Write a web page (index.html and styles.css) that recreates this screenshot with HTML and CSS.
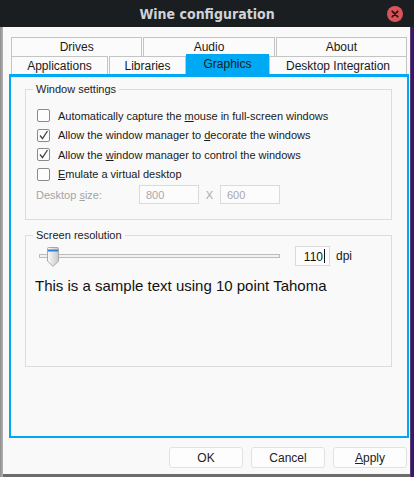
FILE: index.html
```html
<!DOCTYPE html>
<html lang="en">
<head>
    <meta charset="UTF-8">
    <title>Wine configuration</title>
    <link rel="stylesheet" href="styles.css">
</head>
<body>
<div class="desk">
    <div class="titlebar">
        <span></span>
        <span class="title">Wine configuration</span>
        <span class="close">
            <svg width="16" height="16" viewBox="0 0 16 16"><circle cx="8" cy="8" r="8" fill="#d9535a"/><path d="M5.3 5.3l5.4 5.4M10.7 5.3l-5.4 5.4" stroke="#2a1416" stroke-width="1.8" stroke-linecap="round"/></svg>
        </span>
    </div>
    <div class="win">
        <div class="tabs">
            <div class="tabrow row1">
                <a class="tab">Drives</a><a class="tab">Audio</a><a class="tab">About</a>
            </div>
            <div class="tabrow row2">
                <a class="tab w-apps">Applications</a><a class="tab w-libs">Libraries</a><a class="tab w-gfx active">Graphics</a><a class="tab w-desk">Desktop Integration</a>
            </div>
        </div>
        <div class="panel">
            <fieldset class="group g1">
                <legend>Window settings</legend>
                <label class="check"><span class="box"></span><span>Automatically capture the <u>m</u>ouse in full-screen windows</span></label>
                <label class="check"><span class="box"><svg width="13" height="13" viewBox="0 0 13 13"><path d="M3 6.5l2.5 3.2L10.5 2" fill="none" stroke="#444" stroke-width="1.3"/></svg></span><span>Allow the window manager to <u>d</u>ecorate the windows</span></label>
                <label class="check"><span class="box"><svg width="13" height="13" viewBox="0 0 13 13"><path d="M3 6.5l2.5 3.2L10.5 2" fill="none" stroke="#444" stroke-width="1.3"/></svg></span><span>Allow the <u>w</u>indow manager to control the windows</span></label>
                <label class="check"><span class="box"></span><span><u>E</u>mulate a virtual desktop</span></label>
                <div class="size">
                    <span class="size-label">Desktop <u>s</u>ize:</span>
                    <span class="field dim">800</span>
                    <span class="times">X</span>
                    <span class="field dim">600</span>
                </div>
            </fieldset>
            <fieldset class="group g2">
                <legend>Screen resolution</legend>
                <div class="dpi">
                    <div class="slider">
                        <div class="track"></div>
                        <svg class="thumb" width="12" height="20" viewBox="0 0 12 20"><defs><linearGradient id="tg" x1="0" x2="1"><stop offset="0" stop-color="#fafafa"/><stop offset="1" stop-color="#c8c8c8"/></linearGradient></defs><path d="M0.5 1.5a1 1 0 0 1 1-1h9a1 1 0 0 1 1 1v12.5l-5.5 5.5l-5.5-5.5z" fill="url(#tg)" stroke="#a8a8a8"/><rect x="1" y="2.5" width="10" height="2" fill="#2f7fd8"/></svg>
                    </div>
                    <span class="field num">110<i class="caret"></i></span>
                    <span class="unit">dpi</span>
                </div>
                <p class="sample">This is a sample text using 10 point Tahoma</p>
            </fieldset>
        </div>
        <div class="buttons">
            <button class="btn">OK</button>
            <button class="btn">Cancel</button>
            <button class="btn"><u>A</u>pply</button>
        </div>
    </div>
</div>
</body>
</html>
```

FILE: styles.css
```css
body {
    margin: 0;
    font-family: "Liberation Sans", Arial, sans-serif;
    font-size: 11px;
    color: #1a1a1a;
}

.desk {
    width: 414px;
    height: 477px;
    overflow: hidden;
    background: linear-gradient(90deg, #8e8e8e 0, #b4b4b4 3px, #6c6c6c 3px, #6c6c6c 410px, #3d1470 411px);
}

.titlebar {
    height: 27px;
    background: #1b1e21;
    display: grid;
    grid-template-columns: 1fr auto 1fr;
    align-items: center;
}

.title {
    font-family: "DejaVu Sans Condensed", "DejaVu Sans", sans-serif;
    font-stretch: condensed;
    font-weight: bold;
    font-size: 14px;
    color: #cfd3d7;
}

.close {
    justify-self: end;
    display: flex;
    margin-right: 11px;
}

.win {
    margin: 0 4px 0 3px;
    height: 447px;
    background: #f9f9f9;
    padding: 10px 0 0 6px;
    box-sizing: border-box;
}

.tabs {
    margin: 0 3px 0 2px;
}

.tabrow {
    display: flex;
}

.tab {
    display: block;
    text-align: center;
    height: 18px;
    line-height: 19px;
    background: #fbfbfb;
    border: 1px solid #c4c4c4;
    border-bottom: 0;
    box-sizing: border-box;
    margin-right: 1px;
    font-size: 12px;
}

.row1 .tab {
    flex: 1;
    height: 19px;
}

.row1 .tab:last-child,
.row2 .tab:last-child {
    margin-right: 0;
}

.row2 {
    align-items: flex-end;
    height: 18px;
}

.w-apps { width: 97px; }
.w-libs { width: 77px; margin-right: 0; }
.w-gfx { width: 83px; margin-right: 0; }
.w-desk { flex: 1; }

.tab.active {
    background: #00a9f4;
    border-color: #00a9f4;
    height: 20px;
    line-height: 18px;
}

.panel {
    width: 400px;
    height: 364px;
    box-sizing: border-box;
    border: 2px solid #00a9f4;
    border-top-width: 3px;
    padding: 6px 14px 0 14px;
}

.group {
    margin: 0;
    border: 1px solid #dddddd;
    padding: 0 10px 0 10px;
    width: 367px;
    box-sizing: border-box;
}

.group legend {
    padding: 0 3px;
    margin-left: -3px;
    color: #222;
}

.g1 {
    height: 137px;
    padding-top: 11px;
}

.g2 {
    margin-top: 9px;
    height: 138px;
}

.check {
    display: flex;
    align-items: center;
    height: 19.5px;
}

.box {
    width: 13px;
    height: 13px;
    border: 1px solid #8a8a8a;
    border-radius: 2px;
    background: #fdfdfd;
    box-sizing: border-box;
    margin: 0 8px 0 1px;
    position: relative;
    flex: none;
}

.box svg {
    position: absolute;
    left: -1px;
    top: -1px;
}

.size {
    display: flex;
    align-items: center;
    margin-top: 1px;
}

.size-label {
    width: 103px;
    color: #a3a3a3;
}

.field {
    display: block;
    height: 19px;
    line-height: 19px;
    border: 1px solid #dadada;
    box-sizing: border-box;
    background: #fcfcfc;
    padding: 0 6px;
}

.dim {
    width: 60px;
    color: #a8a8a8;
}

.times {
    width: 21px;
    text-align: center;
    color: #a8a8a8;
}

.dpi {
    display: flex;
    align-items: center;
    height: 22px;
    margin-top: 4px;
}

.slider {
    position: relative;
    width: 241px;
    height: 22px;
    margin-left: 3px;
}

.track {
    position: absolute;
    left: 0;
    right: 0;
    top: 9px;
    height: 4px;
    border: 1px solid #bcbcbc;
    background: #f2f2f2;
    box-sizing: border-box;
}

.thumb {
    position: absolute;
    left: 8px;
    top: 2px;
}

.num {
    margin-left: 15px;
    width: 35px;
    height: 20px;
    line-height: 20px;
    text-align: right;
    padding: 0 4px 0 0;
    color: #111;
    font-size: 12px;
}

.caret {
    display: inline-block;
    width: 1px;
    height: 14px;
    background: #111;
    vertical-align: -2px;
    margin-left: 1px;
}

.unit {
    margin-left: 6px;
    font-size: 12px;
}

.sample {
    margin: 10px 0 0 -1px;
    font-size: 15px;
    color: #111;
}

.buttons {
    display: flex;
    justify-content: flex-end;
    gap: 8px;
    margin-top: 9px;
    padding-right: 3px;
}

.btn {
    width: 74px;
    height: 21px;
    font: inherit;
    font-size: 12px;
    color: #222;
    background: #fdfdfd;
    border: 1px solid #e2e2e2;
    border-radius: 3px;
    padding: 0;
}
```
